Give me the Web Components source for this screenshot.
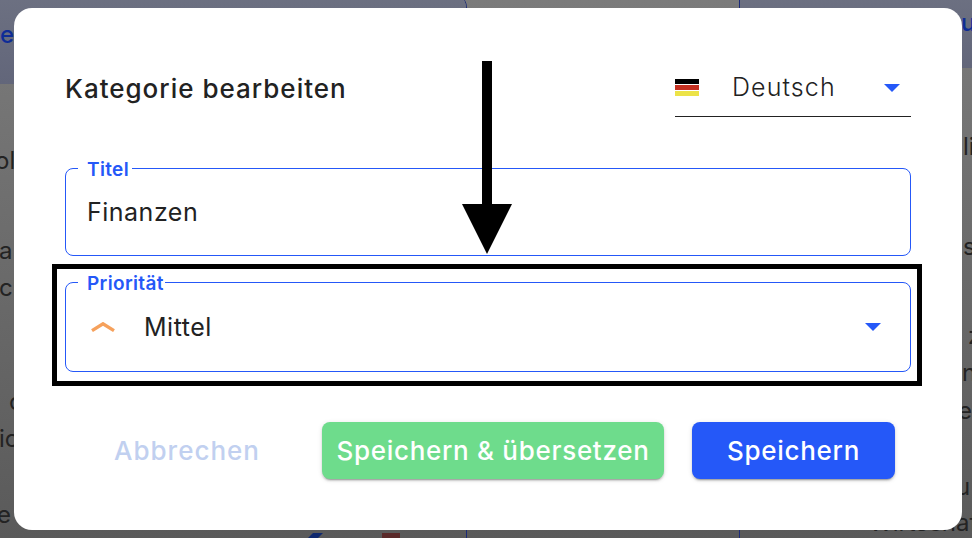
<!DOCTYPE html>
<html lang="de">
<head>
<meta charset="utf-8">
<title>Kategorie bearbeiten</title>
<style>
  html, body { margin: 0; height: 100%; overflow: hidden; }
  body { position: relative; font-family: Inter, "Liberation Sans", sans-serif; }
</style>
</head>
<body>
<page-backdrop></page-backdrop>

<edit-dialog>
  <span slot="title">Kategorie bearbeiten</span>
  <lang-select slot="lang">Deutsch</lang-select>

  <outlined-field label="Titel" notch="54" height="88">
    <span>Finanzen</span>
  </outlined-field>
  <outlined-field label="Priorität" notch="87" height="90" gap="26" select>
    <svg slot="icon" width="24" height="10" viewBox="0 0 24 10"><path d="M1 8.6 12 1.8l11 6.8" fill="none" stroke="#f6a15c" stroke-width="3.4"/></svg>
    <span>Mittel</span>
  </outlined-field>

  <action-button slot="actions" kind="text">Abbrechen</action-button>
  <action-button slot="actions" kind="green">Speichern &amp; übersetzen</action-button>
  <action-button slot="actions" kind="blue">Speichern</action-button>
</edit-dialog>

<script>
  const CARET = `<svg width="16" height="8" viewBox="0 0 16 8"><path d="M0 0h16L8 8z" fill="#2558f8"/></svg>`;

  class PageBackdrop extends HTMLElement {
    constructor() {
      super();
      this.attachShadow({ mode: 'open' });
      const line = (txt, top, left) => `<p style="margin-top:${top}px;margin-left:${left}px">${txt}</p>`;
      this.shadowRoot.innerHTML = `
        <style>
          :host {
            display: grid;
            grid-template-columns: 467px 272px 233px;
            width: 972px;
            height: 538px;
            overflow: hidden;
            background: linear-gradient(#7b7b7b, #5a5a5a);
            color: #232323;
            font-size: 24px;
          }
          .col { height: 546px; margin-top: -8px; overflow: hidden; display: flex; flex-direction: column; box-sizing: border-box; }
          .a { border-right: 1px solid #1c2b78; border-top-right-radius: 16px; }
          .c { border-left: 1px solid #1c2b78; }
          .band { flex: none; display: flex; align-items: center; color: #0e2c96; font-weight: 500;
            background: linear-gradient(#6d7182, #62667a); }
          .a .band { height: 92px; }
          .c .band { height: 76px; }
          p { margin: 0; height: 37px; line-height: 37px; white-space: nowrap; }
          .marks { margin-top: auto; display: flex; height: 9px; padding-left: 304px; }
          .marks i { display: block; width: 18px; height: 9px; margin-left: 58px; background: #5a2a2a; }
        </style>
        <div class="col a">
          <div class="band"><p style="margin-left:0;transform:translateY(-4px)">e</p></div>
          ${line('ol', 58, -5)}
          ${line('a', 53, -1)}
          ${line('cl', 0, -1)}
          ${line('c', 77, 9)}
          ${line('ic', 0, -1)}
          ${line('e', 39, -3)}
          <div class="marks"><svg width="20" height="9" viewBox="0 0 20 9"><path d="M0 9 9 0h10l-9 9z" fill="#10296e"/></svg><i></i></div>
        </div>
        <div class="col b"></div>
        <div class="col c">
          <div class="band"><p style="margin-left:221px;transform:translateY(-8px)">u</p></div>
          ${line('li', 60, 223)}
          ${line('s', 63, 223)}
          ${line('z', 52, 228)}
          ${line('n', 0, 222)}
          ${line('er', 1, 218)}
          ${line('u', 39, 216)}
          ${line('Wirtschaft', -1, 129)}
        </div>
      `;
    }
  }

  class EditDialog extends HTMLElement {
    constructor() {
      super();
      this.attachShadow({ mode: 'open' });
      this.shadowRoot.innerHTML = `
        <style>
          :host {
            position: absolute;
            left: 14px;
            top: 8px;
            width: 948px;
            height: 522px;
            box-sizing: border-box;
            padding: 51px;
            background: #fff;
            border-radius: 18px;
            color: #222;
            display: flex;
            flex-direction: column;
          }
          header { display: flex; justify-content: space-between; align-items: center; height: 58px; margin-bottom: 51px; }
          h2 { margin: 0; font-size: 26px; font-weight: 500; letter-spacing: 1px; }
          .fields { display: flex; flex-direction: column; }
          footer { display: flex; justify-content: flex-end; gap: 28px; margin-top: 50px; padding-right: 16px; }
          .frame { position: absolute; left: 38px; top: 256px; width: 870px; height: 122px; box-sizing: border-box; border: 5px solid #000; pointer-events: none; }
          .arrow { position: absolute; left: 448px; top: 53px; display: block; }
        </style>
        <header>
          <h2><slot name="title"></slot></h2>
          <slot name="lang"></slot>
        </header>
        <div class="fields"><slot></slot></div>
        <footer><slot name="actions"></slot></footer>
        <div class="frame"></div>
        <svg class="arrow" width="50" height="193" viewBox="0 0 50 193"><path d="M20 0h10v143h20L25 193 0 143h20z" fill="#000"/></svg>
      `;
    }
  }

  class LangSelect extends HTMLElement {
    constructor() {
      super();
      this.attachShadow({ mode: 'open' });
      this.shadowRoot.innerHTML = `
        <style>
          :host {
            display: flex;
            align-items: center;
            width: 236px;
            height: 58px;
            box-sizing: border-box;
            border-bottom: 1px solid #222;
            font-size: 25px;
            font-weight: 300;
            letter-spacing: 1.1px;
            color: #222;
          }
          .flag { flex: none; width: 24px; height: 17px; display: grid; grid-template-rows: 5px 5px 5px; gap: 1px; }
          .flag i:nth-child(1) { background: #000; }
          .flag i:nth-child(2) { background: #c42f20; }
          .flag i:nth-child(3) { background: #ece348; }
          .name { margin-left: 33px; flex: 1; margin-top: -1px; }
          svg { margin-right: 11px; display: block; }
        </style>
        <div class="flag"><i></i><i></i><i></i></div>
        <div class="name"><slot></slot></div>
        ${CARET}
      `;
    }
  }

  class OutlinedField extends HTMLElement {
    constructor() {
      super();
      this.attachShadow({ mode: 'open' });
    }
    connectedCallback() {
      const label = this.getAttribute('label');
      const notch = this.getAttribute('notch');
      const select = this.hasAttribute('select');
      this.shadowRoot.innerHTML = `
        <style>
          :host {
            display: block;
            height: ${this.getAttribute('height')}px;
            margin-top: ${this.getAttribute('gap') || 0}px;
            font-size: 25px;
            color: #222;
          }
          fieldset {
            margin: 0;
            height: 100%;
            box-sizing: border-box;
            border: 1px solid #2558f8;
            border-radius: 8px;
            padding: 0 29px 0 21px;
            display: flex;
            align-items: center;
          }
          legend {
            margin-left: -9px;
            padding: 0 0 0 9px;
            width: ${notch}px;
            box-sizing: border-box;
            height: 1px;
            line-height: 3px;
            font-size: 19px;
            font-weight: 600;
            letter-spacing: .35px;
            color: #2558f8;
            white-space: nowrap;
          }
          .row { display: flex; align-items: center; flex: 1; }
          .icon { display: ${select ? 'block' : 'none'}; width: 53px; margin-left: 4px; flex: none; }
          ::slotted(svg) { display: block; margin-top: -1px; }
          .val { flex: 1; letter-spacing: .5px; }
          .caret { display: ${select ? 'block' : 'none'}; }
          .caret svg { display: block; }
        </style>
        <fieldset>
          <legend>${label}</legend>
          <div class="row">
            <div class="icon"><slot name="icon"></slot></div>
            <div class="val"><slot></slot></div>
            <div class="caret">${CARET}</div>
          </div>
        </fieldset>
      `;
    }
  }

  class ActionButton extends HTMLElement {
    constructor() {
      super();
      this.attachShadow({ mode: 'open' });
      this.shadowRoot.innerHTML = `
        <style>
          :host {
            display: flex;
            align-items: center;
            justify-content: center;
            height: 57px;
            box-sizing: border-box;
            padding: 0 16px;
            border-radius: 8px;
            font-size: 26px;
            font-weight: 500;
            letter-spacing: .7px;
            color: #fff;
            white-space: nowrap;
          }
          :host([kind="text"]) { color: #c1d0f0; padding: 0 34px 0 33px; letter-spacing: 1px; }
          :host([kind="green"]) { background: #6edc8c; width: 342px; padding: 0; box-shadow: 0 3px 1px -2px rgba(0,0,0,.2), 0 2px 2px rgba(0,0,0,.14), 0 1px 5px rgba(0,0,0,.12); }
          :host([kind="blue"]) { background: #2558f8; box-shadow: 0 3px 1px -2px rgba(0,0,0,.2), 0 2px 2px rgba(0,0,0,.14), 0 1px 5px rgba(0,0,0,.12); width: 203px; }
        </style>
        <slot></slot>
      `;
    }
  }

  customElements.define('page-backdrop', PageBackdrop);
  customElements.define('edit-dialog', EditDialog);
  customElements.define('lang-select', LangSelect);
  customElements.define('outlined-field', OutlinedField);
  customElements.define('action-button', ActionButton);
</script>
</body>
</html>
